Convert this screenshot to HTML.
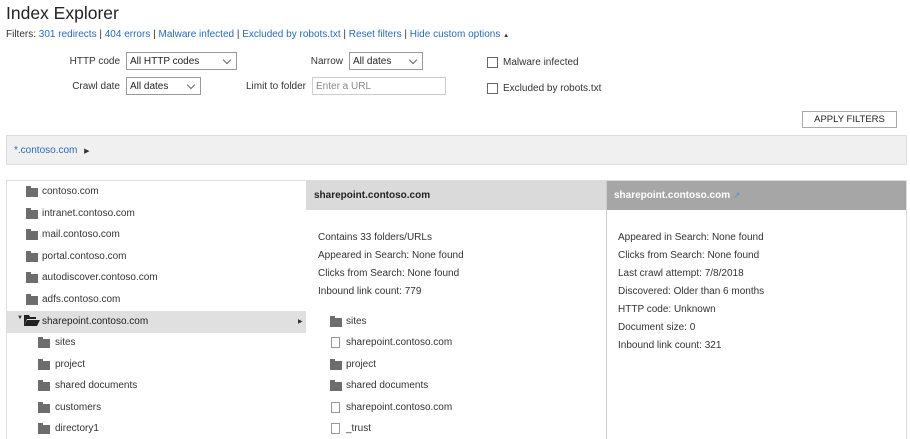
<!DOCTYPE html>
<html><head><style>
body{margin:0;width:910px;height:439px;overflow:hidden;background:#fff;font-family:"Liberation Sans",sans-serif;color:#333;font-size:10px;position:relative}
.a{position:absolute;white-space:nowrap}
.r{position:absolute;white-space:nowrap;text-align:right}
a{color:#2a6bb5;text-decoration:none}
.sel{position:absolute;height:18px;border:1px solid #999;box-sizing:border-box;background:#fff;font-size:10px;padding:3px 3px;color:#222}
.sel:after{content:"";position:absolute;right:6px;top:4px;width:5px;height:5px;border-right:1px solid #666;border-bottom:1px solid #666;transform:rotate(45deg)}
.cb{position:absolute;width:9px;height:9px;border:1px solid #666;background:#fff}
.f{position:absolute;width:12px;height:9px;background:#6d6d6d}
.f:before{content:"";position:absolute;left:0;top:-2px;width:5px;height:2px;background:#6d6d6d}
.d{position:absolute;width:9px;height:11px;border:1px solid #999;box-sizing:border-box;background:#fff}
</style></head><body>
<div class="a" style="left:6px;top:3px;font-size:17.5px;color:#222">Index Explorer</div>
<div class="a" style="left:6px;top:29px">Filters: <a>301 redirects</a> | <a>404 errors</a> | <a>Malware infected</a> | <a>Excluded by robots.txt</a> | <a>Reset filters</a> | <a>Hide custom options</a> <span style="font-size:6px">▲</span></div>
<div class="r" style="left:40px;width:80px;top:56px">HTTP code</div>
<div class="sel" style="left:126px;top:52px;width:111px">All HTTP codes</div>
<div class="r" style="left:40px;width:80px;top:81px">Crawl date</div>
<div class="sel" style="left:126px;top:77px;width:75px">All dates</div>
<div class="r" style="left:263px;width:80px;top:56px">Narrow</div>
<div class="sel" style="left:349px;top:52px;width:74px">All dates</div>
<div class="r" style="left:206px;width:100px;top:81px">Limit to folder</div>
<div class="a" style="left:312px;top:77px;width:134px;height:18px;border:1px solid #ccc;box-sizing:border-box;padding:3px 3px;color:#888;font-size:10px">Enter a URL</div>
<div class="cb" style="left:487px;top:57px"></div><div class="a" style="left:503px;top:57px">Malware infected</div>
<div class="cb" style="left:487px;top:83px"></div><div class="a" style="left:503px;top:83px">Excluded by robots.txt</div>
<div class="a" style="left:802px;top:111px;width:95px;height:17px;border:1px solid #aaa;box-sizing:border-box;text-align:center;font-size:9.5px;line-height:15px;color:#222">APPLY FILTERS</div>
<div class="a" style="left:6px;top:135px;width:901px;height:30px;background:#f0f0f0;border:1px solid #ddd;box-sizing:border-box"></div>
<div class="a" style="left:14px;top:145px"><a>*.contoso.com</a> <span style="font-size:7px;margin-left:4px">▶</span></div>
<div class="a" style="left:6px;top:180px;width:901px;height:1px;background:#ddd"></div>
<div class="a" style="left:6px;top:180px;width:1px;height:259px;background:#ddd"></div>
<div class="a" style="left:306px;top:181px;width:300px;height:29px;background:#dadada"></div>
<div class="a" style="left:606px;top:181px;width:301px;height:29px;background:#a6a6a6"></div>
<div class="a" style="left:606px;top:181px;width:1px;height:258px;background:#ccc"></div>
<div class="a" style="left:906px;top:181px;width:1px;height:258px;background:#ddd"></div>
<div class="a" style="left:7px;top:311px;width:299px;height:22px;background:#e0e0e0"></div>
<div class="a" style="left:298px;top:318px;font-size:6px">▶</div>
<div class="a" style="left:17px;top:315px;font-size:6px">▼</div>
<svg class="a" style="left:24px;top:315px" width="16" height="11"><path d="M0 0h5l1 2h6v2H3L0 11z M3 5h13l-3 6H0z" fill="#222"/></svg>
<div class="f" style="left:26px;top:188px"></div><div class="a" style="left:42px;top:186px">contoso.com</div>
<div class="f" style="left:26px;top:210px"></div><div class="a" style="left:42px;top:208px">intranet.contoso.com</div>
<div class="f" style="left:26px;top:231px"></div><div class="a" style="left:42px;top:229px">mail.contoso.com</div>
<div class="f" style="left:26px;top:253px"></div><div class="a" style="left:42px;top:251px">portal.contoso.com</div>
<div class="f" style="left:26px;top:274px"></div><div class="a" style="left:42px;top:272px">autodiscover.contoso.com</div>
<div class="f" style="left:26px;top:296px"></div><div class="a" style="left:42px;top:294px">adfs.contoso.com</div>
<div class="a" style="left:42px;top:316px;color:#222">sharepoint.contoso.com</div>
<div class="f" style="left:38px;top:339px"></div><div class="a" style="left:55px;top:337px">sites</div>
<div class="f" style="left:38px;top:361px"></div><div class="a" style="left:55px;top:359px">project</div>
<div class="f" style="left:38px;top:382px"></div><div class="a" style="left:55px;top:380px">shared documents</div>
<div class="f" style="left:38px;top:404px"></div><div class="a" style="left:55px;top:402px">customers</div>
<div class="f" style="left:38px;top:425px"></div><div class="a" style="left:55px;top:423px">directory1</div>
<div class="a" style="left:314px;top:190px;font-weight:bold;color:#222">sharepoint.contoso.com</div>
<div class="a" style="left:318px;top:229px;line-height:18px">Contains 33 folders/URLs<br>Appeared in Search: None found<br>Clicks from Search: None found<br>Inbound link count: 779</div>
<div class="f" style="left:330px;top:318px"></div><div class="a" style="left:346px;top:316px">sites</div>
<div class="d" style="left:331px;top:337px"></div><div class="a" style="left:346px;top:337px">sharepoint.contoso.com</div>
<div class="f" style="left:330px;top:361px"></div><div class="a" style="left:346px;top:359px">project</div>
<div class="f" style="left:330px;top:382px"></div><div class="a" style="left:346px;top:380px">shared documents</div>
<div class="d" style="left:331px;top:402px"></div><div class="a" style="left:346px;top:402px">sharepoint.contoso.com</div>
<div class="d" style="left:331px;top:423px"></div><div class="a" style="left:346px;top:423px">_trust</div>
<div class="a" style="left:614px;top:190px;font-weight:bold;color:#fff">sharepoint.contoso.com <span style="color:#5a8ed0;font-weight:normal;font-size:9px">↗</span></div>
<div class="a" style="left:618px;top:229px;line-height:18px">Appeared in Search: None found<br>Clicks from Search: None found<br>Last crawl attempt: 7/8/2018<br>Discovered: Older than 6 months<br>HTTP code: Unknown<br>Document size: 0<br>Inbound link count: 321</div>
</body></html>
